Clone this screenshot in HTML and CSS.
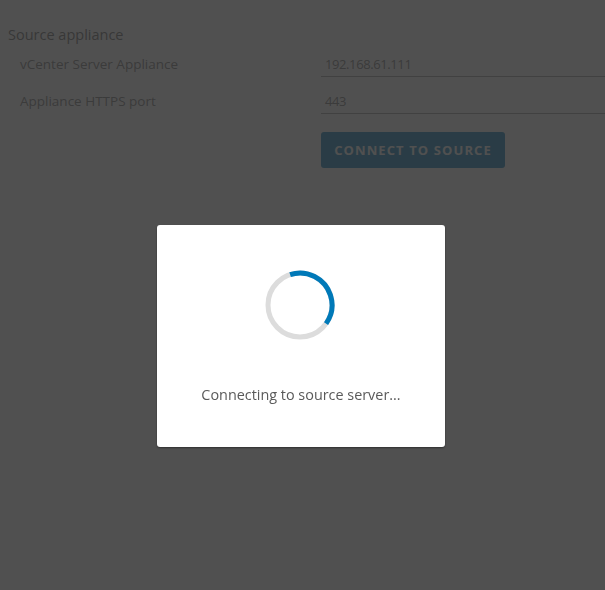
FILE: index.html
```html
<!DOCTYPE html>
<html lang="en">
<head>
<meta charset="utf-8">
<title>Source appliance</title>
<link rel="stylesheet" href="styles.css">
</head>
<body>
<main class="page">
  <section class="section">
    <h2 class="section-title">Source appliance</h2>
    <div class="form">
      <div class="row">
        <label class="label">vCenter Server Appliance</label>
        <div class="field"><span class="value">192.168.61.111</span></div>
      </div>
      <div class="row">
        <label class="label">Appliance HTTPS port</label>
        <div class="field"><span class="value">443</span></div>
      </div>
      <div class="row actions">
        <div class="label"></div>
        <div class="action-cell"><button class="btn">CONNECT TO SOURCE</button></div>
      </div>
    </div>
  </section>
</main>

<div class="backdrop">
  <div class="modal">
    <svg class="spinner" width="72" height="72" viewBox="0 0 72 72">
      <circle cx="36" cy="36" r="32" fill="none" stroke="#dcdcdc" stroke-width="5"/>
      <circle cx="36" cy="36" r="32" fill="none" stroke="#0079b8" stroke-width="5" stroke-dasharray="80 201" transform="rotate(-108 36 36)"/>
    </svg>
    <p class="message">Connecting to source server...</p>
  </div>
</div>
</body>
</html>
```
FILE: styles.css
```css
html, body {
  margin: 0;
  padding: 0;
  background: #ffffff;
  font-family: "Open Sans", Lato, "Liberation Sans", sans-serif;
}

.page {
  padding: 26px 0 0 8px;
}

.section-title {
  margin: 0;
  font-size: 14.5px;
  font-weight: 400;
  color: #5c5c5c;
  line-height: 18px;
}

.form {
  display: flex;
  flex-direction: column;
  padding-top: 3px;
}

.row {
  display: grid;
  grid-template-columns: 313px 1fr;
  height: 37px;
}

.label {
  padding-left: 12px;
  font-size: 13.5px;
  color: #707070;
  line-height: 18px;
  padding-top: 8px;
}

.field {
  border-bottom: 1px solid #9a9a9a;
  height: 30px;
  box-sizing: border-box;
  padding: 5px 0 0 4px;
}

.value {
  font-size: 13px;
  letter-spacing: -0.4px;
  color: #707070;
  line-height: 18px;
}

.actions {
  height: auto;
  padding-top: 11px;
}

.btn {
  display: block;
  width: 184px;
  height: 36px;
  border: none;
  border-radius: 3px;
  background: #0079b8;
  color: #ffffff;
  font-family: inherit;
  font-size: 13px;
  font-weight: 700;
  letter-spacing: 1.1px;
  padding: 0;
}

.backdrop {
  position: fixed;
  inset: 0;
  background: rgba(49, 49, 49, 0.85);
  display: flex;
  justify-content: center;
  align-items: flex-start;
  padding: 225px 3px 0 0;
}

.modal {
  width: 288px;
  height: 222px;
  background: #ffffff;
  border-radius: 3px;
  box-shadow: 0 1px 2px rgba(0, 0, 0, 0.4);
  display: flex;
  flex-direction: column;
  align-items: center;
  box-sizing: border-box;
  padding-top: 44px;
}

.spinner {
  display: block;
  margin-left: -3px;
}

.message {
  margin: 45px 0 0;
  font-size: 14.4px;
  color: #5a5a5a;
  line-height: 18px;
}
```
